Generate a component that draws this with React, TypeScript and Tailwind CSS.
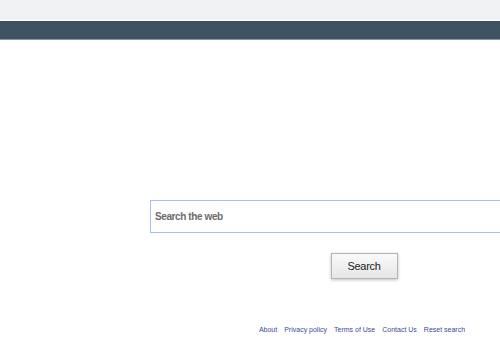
export default function App() {
  return (
    <div className="w-[500px] h-[350px] overflow-hidden bg-white font-['Liberation_Sans',Arial,sans-serif]">
      {/* top bars */}
      <div className="h-[20px] bg-[#f0f2f3]" />
      <div className="h-px bg-white" />
      <div className="h-[19px] bg-[#3f5262] border-b border-[#8a97a2]" />

      <div className="w-[730px] flex flex-col items-center pt-[160px]">
        <div className="w-[430px] h-[33px] border border-[#a7c0ee] flex items-center px-[4px]">
          <input
            className="w-full outline-none text-[10px] tracking-[-0.4px] font-bold text-[#555] placeholder:text-[#6b6b6b] bg-transparent"
            placeholder="Search the web"
          />
        </div>

        <button className="mt-[20px] mr-[2px] w-[67px] h-[26px] border border-[#b4b4b4] bg-gradient-to-b from-[#fafafa] to-[#e6e6e6] shadow-[0_1px_3px_rgba(0,0,0,0.25)] text-[11px] tracking-[-0.3px] text-[#222]">
          Search
        </button>

        <div className="mt-[47px] pr-[6px] flex gap-[7px] text-[7px] leading-none text-[#3a4a9c]">
          <a href="#">About</a>
          <a href="#">Privacy policy</a>
          <a href="#">Terms of Use</a>
          <a href="#">Contact Us</a>
          <a href="#">Reset search</a>
        </div>
      </div>
    </div>
  );
}
